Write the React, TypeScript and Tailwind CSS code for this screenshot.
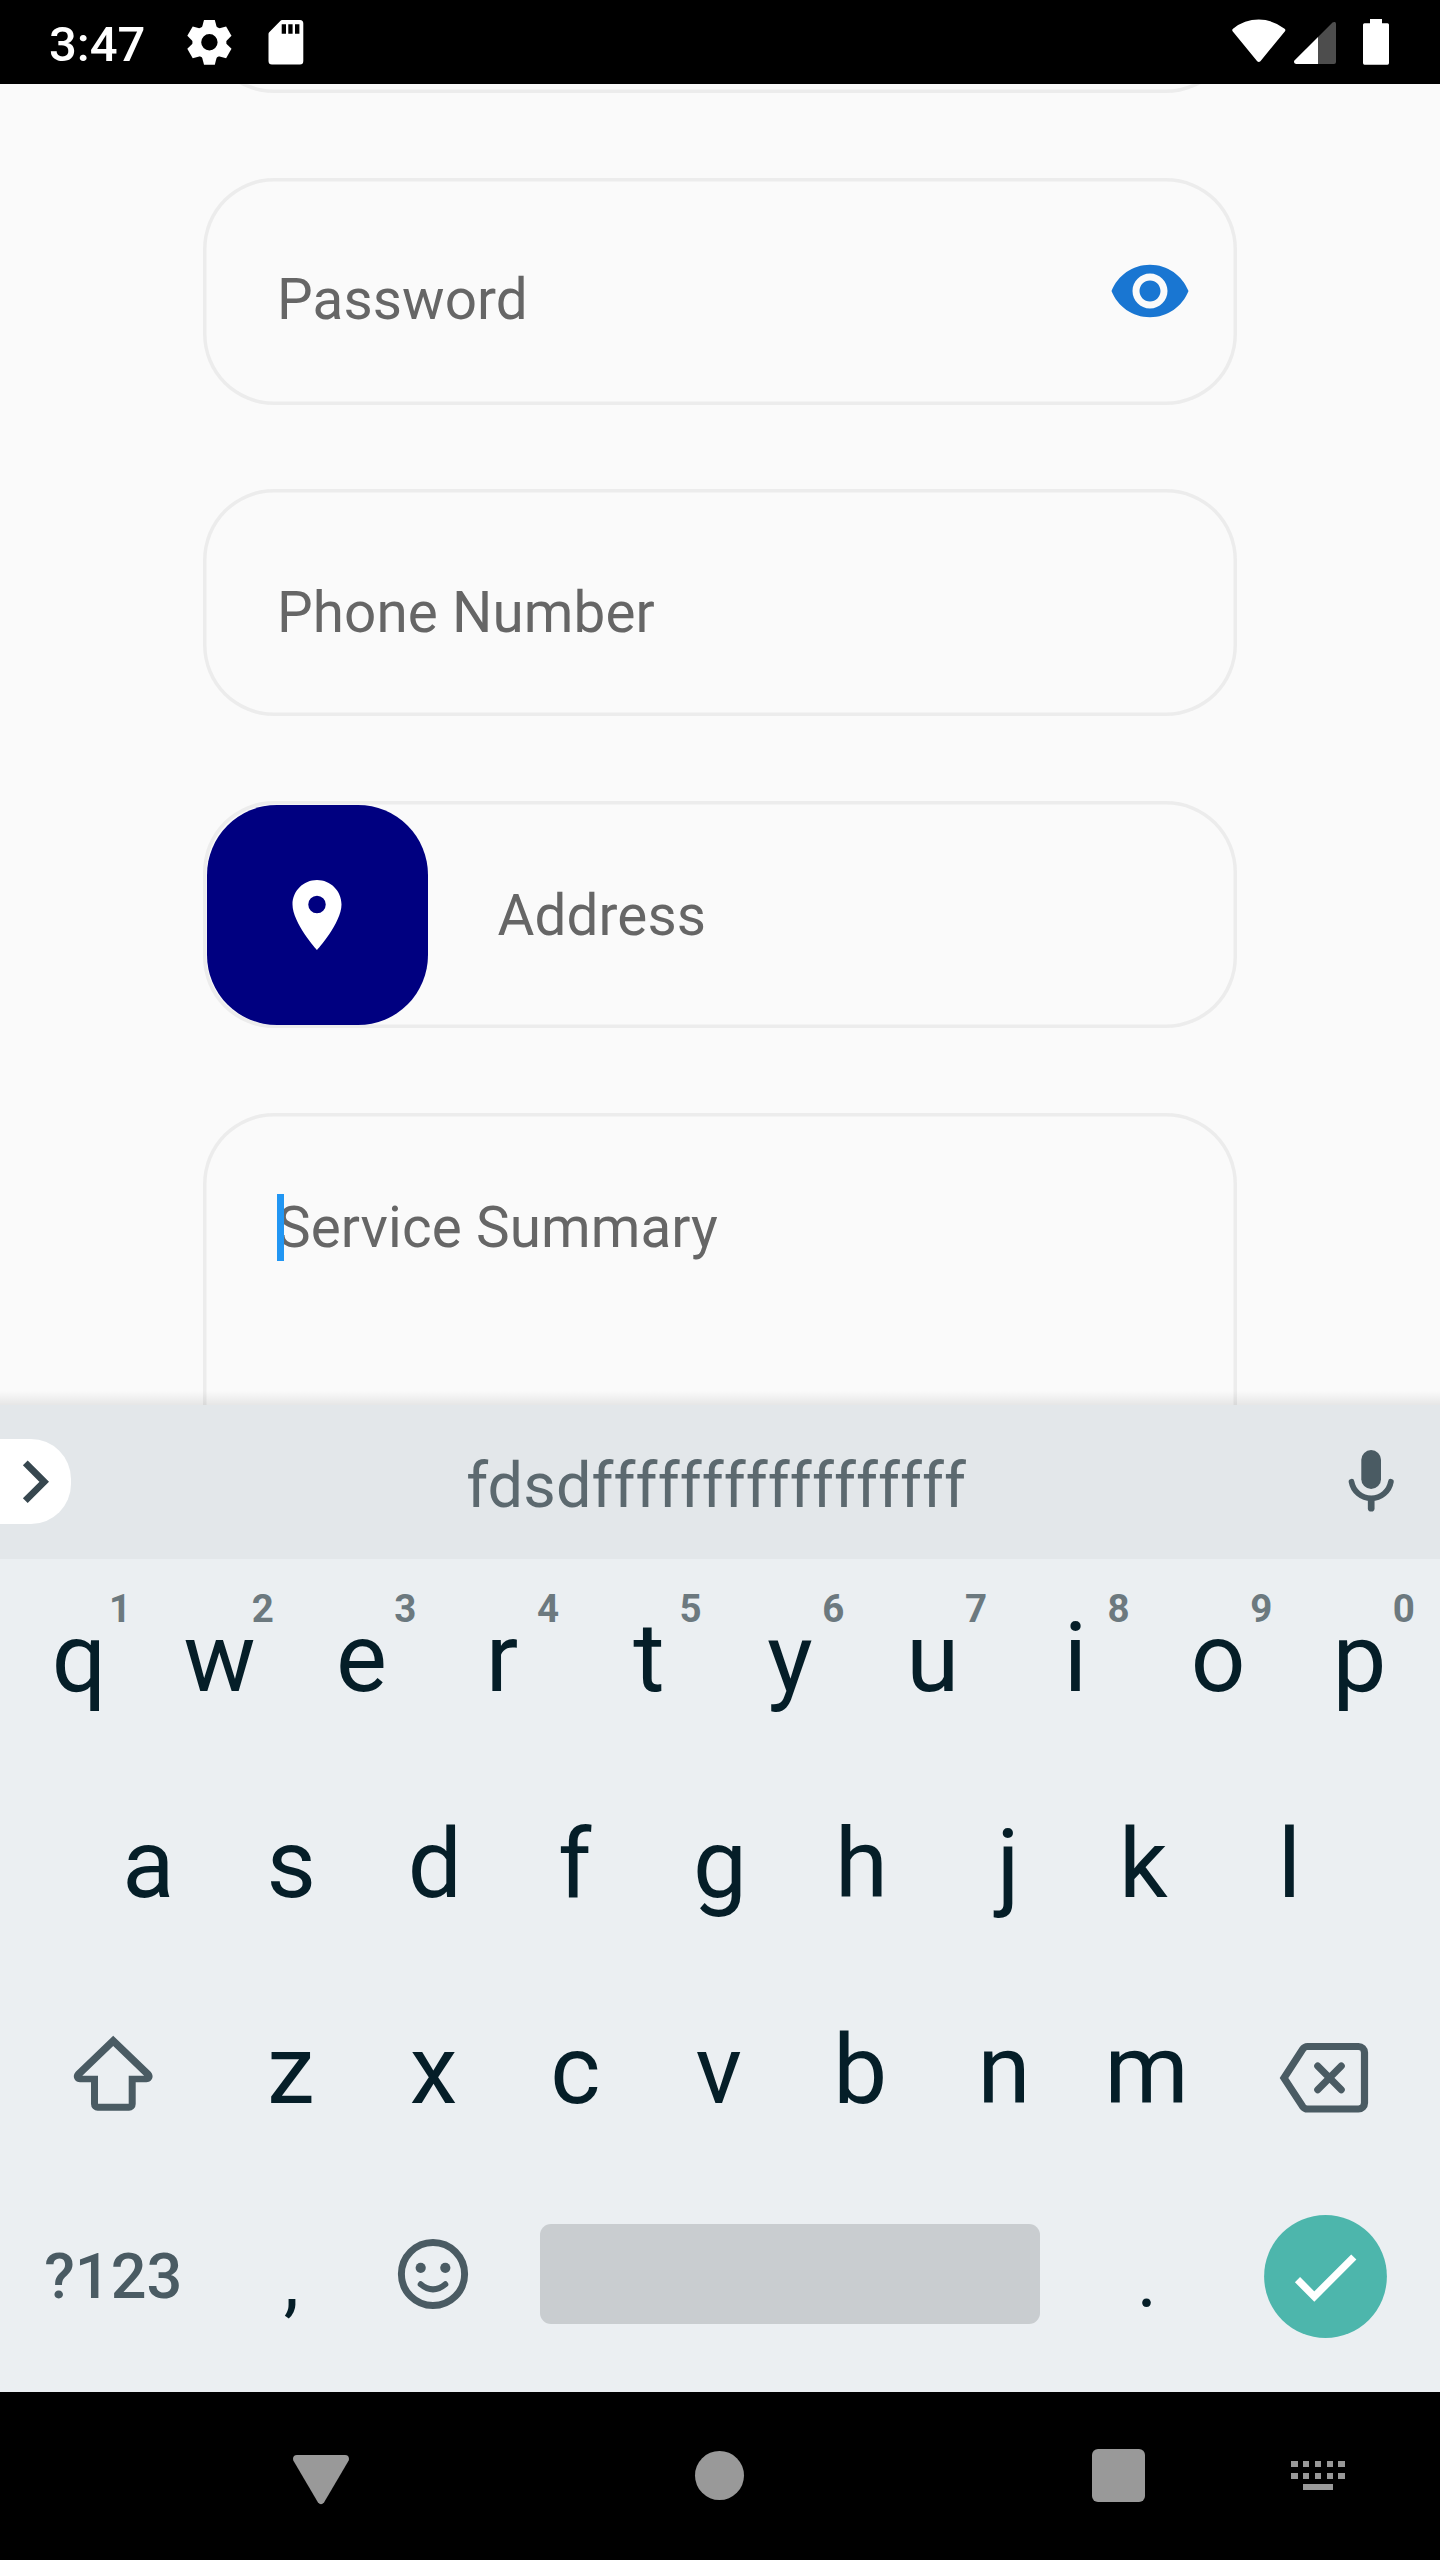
import type { ReactNode } from "react";
import { MdVisibility, MdLocationOn } from "react-icons/md";

const INK = "#4a5b63";

function StatusBar() {
  return (
    <header className="relative z-10 flex h-[84px] items-start bg-black text-white">
      <span className="ml-[49px] mt-[16px] w-[100px] text-[49px] leading-[58px] font-medium">3:47</span>
      <svg className="ml-[36px] mt-[18px]" width="48" height="48" viewBox="-24.400 -24.300 48 48" fill="#fff">
        <path
          fillRule="evenodd"
          d="M0-17A17 17 0 1 1 0 17A17 17 0 1 1 0-17ZM0-8.2A8.2 8.2 0 1 0 0 8.2A8.2 8.2 0 1 0 0-8.2Z"
        />
        {[0, 60, 120, 180, 240, 300].map((a) => (
          <path key={a} transform={`rotate(${a})`} d="M-5.4-22.4H5.4L7.6-14L4-10H-4L-7.6-14Z" />
        ))}
      </svg>
      <svg className="ml-[35px] mt-[20px]" width="36" height="45" viewBox="0 0 36 45">
        <path
          fill="#fff"
          fillRule="evenodd"
          d="M14 0H32Q35.3 0 35.3 3.5V41Q35.3 44.6 32 44.6H4Q.5 44.6 .5 41V14Q.5 13 1.2 12.3L12.5 .8Q13.2 0 14 0ZM13.7 4.2V13.8H18V4.2ZM20.3 4.2V13.8H24.6V4.2ZM27 4.2V13.8H31.4V4.2Z"
        />
      </svg>
      <div className="ml-auto mr-[51px] mt-[19px] flex">
        <svg width="54" height="44" viewBox="0 0 54 44" fill="#fff">
          <path d="M.6 12.3Q-.4 10.8 1 9.7Q12.500 .6 26.800 .6Q41 .6 52.600 9.700Q54 10.800 53 12.300L28.400 42.200Q26.800 43.800 25.200 42.200Z" />
        </svg>
        <svg className="ml-[8px] mt-[2px]" width="43" height="44" viewBox="0 0 43 44">
          <path fill="#4d4d4d" d="M24 16L38.500 1.500Q39.800 .6 41 1.100Q42 1.500 42 3V41Q42 43 40 43H24Z" />
          <path fill="#fff" d="M24 16V43H2Q-.6 42.400 .2 39.800Z" />
        </svg>
        <svg className="ml-[26px]" width="26" height="46" viewBox="0 0 26 46" fill="#fff">
          <path d="M7 0H19V4.300H24.500Q26 4.300 26 5.800V44Q26 45.800 24.500 45.800H1.500Q0 45.800 0 44V5.800Q0 4.300 1.500 4.300H7Z" />
        </svg>
      </div>
    </header>
  );
}

function Field({ children, className = "h-[227px]" }: { children?: ReactNode; className?: string }) {
  return (
    <div
      className={`${className} flex w-full shrink-0 rounded-[71px] text-[56.600px] leading-[66px] tracking-[0.100px] text-[#666666] shadow-[inset_0_0_0_3.5px_#ececec]`}
    >
      {children}
    </div>
  );
}

function Form() {
  return (
    <main className="relative flex h-[1321px] flex-col gap-[84.700px] overflow-hidden bg-[#fafafa] px-[203px]">
      <Field className="-mt-[218px] h-[227px]" />
      <Field>
        <span className="ml-[74px] mt-[89px]">Password</span>
        <MdVisibility className="ml-auto mr-[45.500px] mt-[71px] size-[84px] text-[#1976d2]" />
      </Field>
      <Field>
        <span className="ml-[74px] mt-[90.300px]">Phone Number</span>
      </Field>
      <Field>
        <div className="ml-[3.500px] mt-[3.500px] flex h-[220px] w-[221px] items-center justify-center rounded-[70px] bg-[#000080]">
          <MdLocationOn className="size-[84px] text-white" />
        </div>
        <span className="ml-[70px] mt-[82px]">Address</span>
      </Field>
      <Field className="h-[500px]">
        <span className="relative ml-[74px] mt-[82px]">
          Service Summary
          <span className="absolute -top-px left-0 h-[67px] w-[7px] bg-[#2196f3]" />
        </span>
      </Field>
      <div className="absolute inset-x-0 bottom-0 h-[14px] bg-linear-to-b from-transparent to-black/8" />
    </main>
  );
}

function SuggestionStrip() {
  return (
    <div className="flex h-[154px] items-start bg-[#e3e7ea]">
      <div className="mt-[34px] h-[85px] w-[71px] rounded-r-[40px] bg-white">
        <svg width="71" height="85" viewBox="0 0 71 85">
          <path d="M25.300 23.900L44.200 42.800L25.300 61.700" fill="none" stroke="#37474f" strokeWidth="6.800" />
        </svg>
      </div>
      <span className="ml-[395.300px] mt-[44px] text-[63px] leading-[74px] tracking-[0.130px] text-[#5c696f]">
        fdsdfffffffffffffffff
      </span>
      <svg className="mr-[44px] ml-auto mt-[44px]" width="50" height="66" viewBox="0 0 50 66">
        <rect x="15.300" y="1" width="19.700" height="39" rx="9.850" fill={INK} />
        <g fill="none" stroke={INK} strokeLinecap="round">
          <path d="M5.500 32.700A20 20 0 0 0 44.900 32.700" strokeWidth="5.700" />
          <path d="M25.200 51V59.200" strokeWidth="6.700" />
        </g>
      </svg>
    </div>
  );
}

/* Horizontal nudge in px that centres each glyph's ink inside its key. */
const NUDGE: Record<string, number> = {
  q: 2.1, e: -0.7, r: -2.7, t: 1.4, y: -0.2, p: -1.1, s: 0.2, d: 1.1, f: -1.6, g: 1, j: 4, k: -3.5, c: -0.6, b: -1.1,
};

function Key({ label, hint }: { label: string; hint?: string }) {
  return (
    <div className="relative h-[206px] w-[142.650px] shrink-0 text-center text-[96px] leading-[206px] text-[#051e28]">
      <span className="inline-block" style={{ transform: `translateX(${NUDGE[label] ?? 0}px)` }}>
        {label}
      </span>
      {hint && (
        <span className="absolute left-[93.500px] top-[31px] w-[42px] text-[38.500px] leading-[46px] font-bold text-[#6c797f]">
          {hint}
        </span>
      )}
    </div>
  );
}

function PunctuationKey({ label }: { label: string }) {
  return (
    <div className="mt-[5px] h-[200px] w-[142.650px] shrink-0 pl-px text-center text-[77px] leading-[206px] text-[#051e28]">
      {label}
    </div>
  );
}

function Keyboard() {
  return (
    <section className="h-[833px] bg-[#ebeff2]">
      <div className="flex h-[202px] items-end pl-[5.600px]">
        {"qwertyuiop".split("").map((c, i) => (
          <Key key={c} label={c} hint={"1234567890"[i]} />
        ))}
      </div>
      <div className="flex h-[206px] pl-[77px]">
        {"asdfghjkl".split("").map((c) => (
          <Key key={c} label={c} />
        ))}
      </div>
      <div className="flex h-[206px]">
        <svg className="ml-[73px] mt-[68px] mr-[66.500px]" width="80" height="76" viewBox="73 35 80 76">
          <path
            fill={INK}
            fillRule="evenodd"
            d="M113.200 35.700L76 71.500C71.500 76 74.500 82.300 80 82.300H91V104A6.700 6.700 0 0 0 97.700 110.700H129A6.700 6.700 0 0 0 135.700 104V82.300H146.400C151.900 82.300 154.900 76 150.400 71.500ZM113.200 46L82.300 75.700H98V103.700H128.700V75.700H144.100Z"
          />
        </svg>
        {"zxcvbnm".split("").map((c) => (
          <Key key={c} label={c} />
        ))}
        <svg className="ml-[61px] mt-[75px]" width="90" height="72" viewBox="279 42 90 72" fill="none" stroke={INK}>
          <path
            strokeWidth="7.200"
            d="M284 78L302.500 49.500Q304.500 46.500 307.500 46.500H358.500A6 6 0 0 1 364.500 52.500V103A6 6 0 0 1 358.500 109H307.500Q304.500 109 302.500 106.300Z"
          />
          <path strokeWidth="7" strokeLinecap="round" d="M317.700 66L341.300 89.700M341.300 66L317.700 89.700" />
        </svg>
      </div>
      <div className="flex h-[205px]">
        <span className="mt-[67px] w-[219.500px] pl-[7px] text-center text-[63px] leading-[74px] font-medium text-[#4a5b63]">
          ?123
        </span>
        <PunctuationKey label="," />
        <svg className="ml-[35px] mr-[71px] mt-[65px]" width="72" height="72" viewBox="-36 -36 72 72">
          <circle r="31.600" fill="none" stroke={INK} strokeWidth="7" />
          <circle cx="-12.300" cy="-6.200" r="5.100" fill={INK} />
          <circle cx="12.300" cy="-6.200" r="5.100" fill={INK} />
          <path d="M-12.300 10.300Q0 20.500 12.300 10.300" fill="none" stroke={INK} strokeWidth="6" strokeLinecap="round" />
        </svg>
        <div className="mt-[51px] h-[100px] w-[500px] rounded-[11px] bg-[#c9cdd0]" />
        <div className="ml-[35px]">
          <PunctuationKey label="." />
        </div>
        <svg className="ml-[46px] mt-[42px]" width="123" height="123" viewBox="-61.500 -61.500 123 123">
          <circle r="61.400" fill="#4db6ac" />
          <path d="M-28 3.200L-11.200 20L28.300 -19.500" fill="none" stroke="#fff" strokeWidth="7.300" />
        </svg>
      </div>
    </section>
  );
}

function NavBar() {
  return (
    <footer className="flex h-[168px] items-start bg-black">
      <svg className="ml-[293px] mt-[63px]" width="56" height="50" viewBox="0 0 56 50" fill="#999">
        <path d="M4 0H52Q57 .5 55.700 5.500L31 47.500Q28 51 25 47.500L.3 5.500Q-1 .5 4 0Z" />
      </svg>
      <div className="ml-[346px] mt-[59px] size-[49px] rounded-full bg-[#999999]" />
      <div className="ml-[347.500px] mt-[57px] size-[53px] rounded-[6px] bg-[#999999]" />
      <div className="ml-[147px] mt-[69px] flex w-[53px] flex-col items-center gap-[5.500px]">
        {[0, 1].map((r) => (
          <div key={r} className="flex gap-[5.600px]">
            {[0, 1, 2, 3, 4].map((c) => (
              <div key={c} className="size-[6.200px] bg-[#999999]" />
            ))}
          </div>
        ))}
        <div className="h-[6px] w-[30px] bg-[#999999]" />
      </div>
    </footer>
  );
}

export default function App() {
  return (
    <div className="w-[1440px] overflow-hidden bg-black font-['Roboto',sans-serif]">
      <StatusBar />
      <Form />
      <SuggestionStrip />
      <Keyboard />
      <NavBar />
    </div>
  );
}
